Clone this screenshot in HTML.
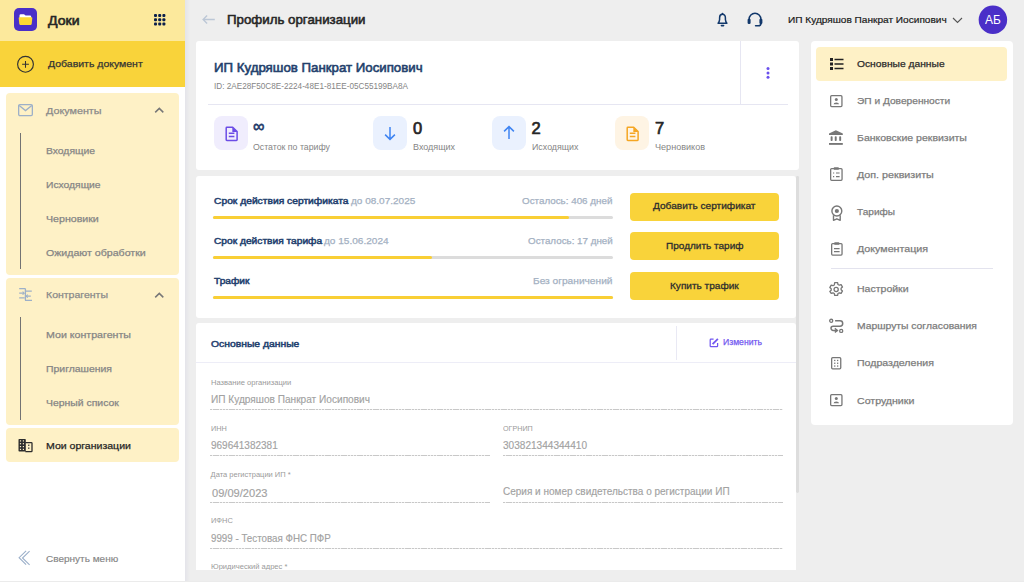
<!DOCTYPE html>
<html><head><meta charset="utf-8"><style>
html,body{margin:0;padding:0;width:1024px;height:582px;overflow:hidden;background:#EEEEEE;}
body{position:relative;font-family:"Liberation Sans",sans-serif;}
.t{position:absolute;white-space:nowrap;transform-origin:0 0;}
.r{position:absolute;}
.s{position:absolute;overflow:visible;}
</style></head><body>
<div class="r" style="left:0px;top:0px;width:1024px;height:582px;background:#EEEEEE;border-radius:0px;"></div>
<div class="r" style="left:0px;top:0px;width:185px;height:582px;background:#FFFFFF;border-radius:0px;"></div>
<div class="r" style="left:185px;top:0px;width:5px;height:582px;background:linear-gradient(90deg,#E4E4EA,#EEEEEE);border-radius:0px;"></div>
<div class="r" style="left:0px;top:0px;width:185px;height:41px;background:#FCE99C;border-radius:0px;"></div>
<div class="r" style="left:0px;top:41px;width:185px;height:46px;background:#F9D33A;border-radius:0px;"></div>
<div class="r" style="left:6px;top:93px;width:173px;height:181.7px;background:#FEF1C6;border-radius:4px;"></div>
<div class="r" style="left:6px;top:277.8px;width:173px;height:147.2px;background:#FEF1C6;border-radius:4px;"></div>
<div class="r" style="left:6px;top:428.2px;width:173px;height:33.8px;background:#FEF1C6;border-radius:4px;"></div>
<div class="r" style="left:0px;top:581px;width:1024px;height:1px;background:#EBEBEB;border-radius:0px;"></div>
<svg class="s" style="left:14px;top:8px" width="23" height="23" viewBox="0 0 23 23" fill="none"><rect width="23" height="23" rx="5" fill="#4A2FC8"/><path d="M5.5 7.5q0-1.3 1.3-1.3h3.2l1.6 1.4h4.4q1.2 0 1.2 1.2v1.5h-11.7z" fill="#fff"/><path d="M4.7 10q0-.8.8-.8h12q.8 0 .8.8l-.6 6.1q-.1.8-.9.8H6.2q-.8 0-.9-.8z" fill="#FDD835"/></svg>
<div class="t" style="left:47.80px;top:13.79px;font-size:13px;line-height:13px;font-weight:400;color:#262626;-webkit-text-stroke:0.6px currentColor;transform:scaleX(1.0814);">Доки</div>
<svg class="s" style="left:154px;top:14px" width="12" height="12" viewBox="0 0 12 12" fill="none"><rect x="0.0" y="0.0" width="3" height="3" rx="1" fill="#0B1F4B"/><rect x="4.2" y="0.0" width="3" height="3" rx="1" fill="#0B1F4B"/><rect x="8.4" y="0.0" width="3" height="3" rx="1" fill="#0B1F4B"/><rect x="0.0" y="4.2" width="3" height="3" rx="1" fill="#0B1F4B"/><rect x="4.2" y="4.2" width="3" height="3" rx="1" fill="#0B1F4B"/><rect x="8.4" y="4.2" width="3" height="3" rx="1" fill="#0B1F4B"/><rect x="0.0" y="8.4" width="3" height="3" rx="1" fill="#0B1F4B"/><rect x="4.2" y="8.4" width="3" height="3" rx="1" fill="#0B1F4B"/><rect x="8.4" y="8.4" width="3" height="3" rx="1" fill="#0B1F4B"/></svg>
<svg class="s" style="left:16px;top:55px" width="19" height="19" viewBox="0 0 19 19" fill="none"><circle cx="9.5" cy="9.3" r="7.9" stroke="#333" stroke-width="1.15"/><path d="M9.5 5.9v6.8M6.1 9.3h6.8" stroke="#333" stroke-width="1.05"/></svg>
<div class="t" style="left:48.00px;top:59.41px;font-size:9.97px;line-height:9.97px;font-weight:400;color:#333333;-webkit-text-stroke:0.25px currentColor;transform:scaleX(1.0521);">Добавить документ</div>
<svg class="s" style="left:18px;top:104px" width="15" height="12" viewBox="0 0 15 12" fill="none"><rect x="0.65" y="0.65" width="13.7" height="10.9" rx="1.2" stroke="#9DB0C8" stroke-width="1.3"/><path d="M1.2 1.6l6.3 5 6.3-5" stroke="#9DB0C8" stroke-width="1.3"/></svg>
<div class="t" style="left:45.50px;top:105.50px;font-size:9.5px;line-height:9.5px;font-weight:400;color:#8A8A8A;-webkit-text-stroke:0.25px currentColor;transform:scaleX(1.1333);">Документы</div>
<svg class="s" style="left:154px;top:105.6px" width="11" height="8" viewBox="0 0 11 8" fill="none"><path d="M1.2 6.4L5.3 2.4 9.3 6.4" stroke="#777" stroke-width="1.5"/></svg>
<div class="r" style="left:20px;top:133px;width:1.2px;height:135.8px;background:#737373;border-radius:0px;"></div>
<div class="t" style="left:46.00px;top:145.50px;font-size:9.5px;line-height:9.5px;font-weight:400;color:#858585;-webkit-text-stroke:0.25px currentColor;transform:scaleX(1.0879);">Входящие</div>
<div class="t" style="left:46.00px;top:179.70px;font-size:9.5px;line-height:9.5px;font-weight:400;color:#858585;-webkit-text-stroke:0.25px currentColor;transform:scaleX(1.0835);">Исходящие</div>
<div class="t" style="left:46.00px;top:213.90px;font-size:9.5px;line-height:9.5px;font-weight:400;color:#858585;-webkit-text-stroke:0.25px currentColor;transform:scaleX(1.1176);">Черновики</div>
<div class="t" style="left:46.00px;top:248.10px;font-size:9.5px;line-height:9.5px;font-weight:400;color:#858585;-webkit-text-stroke:0.25px currentColor;transform:scaleX(1.1151);">Ожидают обработки</div>
<svg class="s" style="left:19px;top:288px" width="14" height="14" viewBox="0 0 14 14" fill="none"><path d="M0.2 0.7h6.4M6.4 0.7v11.6M6 12.3h7M6.8 3.2h6M0.2 9.9h5.3M0.2 5.2h4.5M11.8 8.2H7.3" stroke="#9DB0C8" stroke-width="1.3"/><path d="M3.6 3.7l1.6 1.5-1.6 1.5M8.8 6.7L7.2 8.2l1.6 1.5" stroke="#9DB0C8" stroke-width="1.1"/></svg>
<div class="t" style="left:46.00px;top:290.40px;font-size:9.5px;line-height:9.5px;font-weight:400;color:#8A8A8A;-webkit-text-stroke:0.25px currentColor;transform:scaleX(1.1082);">Контрагенты</div>
<svg class="s" style="left:154px;top:291.4px" width="11" height="8" viewBox="0 0 11 8" fill="none"><path d="M1.2 6.4L5.3 2.4 9.3 6.4" stroke="#777" stroke-width="1.5"/></svg>
<div class="r" style="left:20px;top:317.2px;width:1.2px;height:102.8px;background:#737373;border-radius:0px;"></div>
<div class="t" style="left:46.00px;top:330.30px;font-size:9.5px;line-height:9.5px;font-weight:400;color:#858585;-webkit-text-stroke:0.25px currentColor;transform:scaleX(1.1182);">Мои контрагенты</div>
<div class="t" style="left:46.00px;top:364.30px;font-size:9.5px;line-height:9.5px;font-weight:400;color:#858585;-webkit-text-stroke:0.25px currentColor;transform:scaleX(1.0981);">Приглашения</div>
<div class="t" style="left:46.00px;top:398.30px;font-size:9.5px;line-height:9.5px;font-weight:400;color:#858585;-webkit-text-stroke:0.25px currentColor;transform:scaleX(1.0961);">Черный список</div>
<svg class="s" style="left:18px;top:439px" width="15" height="13" viewBox="0 0 15 13" fill="none"><rect x="0.5" y="0" width="7.3" height="12.6" rx="0.8" fill="#2D2D2D"/><path d="M7.3 3.6h6a0.7 0.7 0 0 1 .7.7v7.6a0.7 0.7 0 0 1-.7.7h-6" stroke="#2D2D2D" stroke-width="1.3"/><rect x="1.9" y="1.3" width="1.2" height="1.2" fill="#FEF1C6"/><rect x="1.9" y="4.1" width="1.2" height="1.2" fill="#FEF1C6"/><rect x="1.9" y="7.0" width="1.2" height="1.2" fill="#FEF1C6"/><rect x="1.9" y="9.8" width="1.2" height="1.2" fill="#FEF1C6"/><rect x="4.8" y="1.3" width="1.2" height="1.2" fill="#FEF1C6"/><rect x="4.8" y="4.1" width="1.2" height="1.2" fill="#FEF1C6"/><rect x="4.8" y="7.0" width="1.2" height="1.2" fill="#FEF1C6"/><rect x="4.8" y="9.8" width="1.2" height="1.2" fill="#FEF1C6"/><rect x="10.1" y="5.6" width="1.3" height="1.3" fill="#2D2D2D"/><rect x="10.1" y="8.5" width="1.3" height="1.3" fill="#2D2D2D"/></svg>
<div class="t" style="left:46.00px;top:441.00px;font-size:9.5px;line-height:9.5px;font-weight:400;color:#252525;-webkit-text-stroke:0.25px currentColor;transform:scaleX(1.1083);">Мои организации</div>
<svg class="s" style="left:18px;top:550.3px" width="13" height="16" viewBox="0 0 13 16" fill="none"><path d="M8.1 0.8L1.1 7.7l7 6.9M11.6 1.1L4.5 8l7.1 6.9" stroke="#9CB0CA" stroke-width="1.1"/></svg>
<div class="t" style="left:45.70px;top:553.98px;font-size:9.7px;line-height:9.7px;font-weight:400;color:#858585;-webkit-text-stroke:0.15px currentColor;transform:scaleX(1.0338);">Свернуть меню</div>
<svg class="s" style="left:202px;top:14px" width="14" height="11" viewBox="0 0 14 11" fill="none"><path d="M12.8 5.5H1.4M5.1 1.5L1.1 5.5l4 4" stroke="#BCC7D6" stroke-width="1.35"/></svg>
<div class="t" style="left:226.50px;top:12.89px;font-size:13px;line-height:13px;font-weight:400;color:#262626;-webkit-text-stroke:0.55px currentColor;transform:scaleX(1.0223);">Профиль организации</div>
<svg class="s" style="left:717px;top:12px" width="11" height="15" viewBox="0 0 11 15" fill="none"><path d="M1.1 11.3H9.9C9 10.3 8.5 9 8.4 7.5V5.7C8.4 3.6 7.2 2.3 5.5 2.3S2.6 3.6 2.6 5.7V7.5C2.5 9 2 10.3 1.1 11.3Z" stroke="#12386B" stroke-width="1.5" stroke-linejoin="round"/><circle cx="5.5" cy="1.6" r="0.9" fill="#12386B"/><path d="M4.4 13.6h2.2" stroke="#12386B" stroke-width="1.6" stroke-linecap="round"/></svg>
<svg class="s" style="left:747px;top:12px" width="16" height="16" viewBox="0 0 16 16" fill="none"><path d="M2.1 10V7.2a5.9 5.9 0 0 1 11.8 0V10" stroke="#12386B" stroke-width="1.5"/><rect x="0.6" y="6.8" width="3" height="5.2" rx="1.2" fill="#12386B"/><rect x="12.4" y="6.8" width="3" height="5.2" rx="1.2" fill="#12386B"/><path d="M13.9 11.5q0 2.3-2.6 2.3H8.6" stroke="#12386B" stroke-width="1.6" stroke-linecap="round"/></svg>
<div class="t" style="left:788.00px;top:14.87px;font-size:9.6px;line-height:9.6px;font-weight:400;color:#1A1A1A;-webkit-text-stroke:0.2px currentColor;transform:scaleX(1.0513);">ИП Кудряшов Панкрат Иосипович</div>
<svg class="s" style="left:952px;top:17px" width="11" height="7" viewBox="0 0 11 7" fill="none"><path d="M1 1l4.5 4.5L10 1" stroke="#555" stroke-width="1.1"/></svg>
<svg class="s" style="left:978px;top:5px" width="30" height="30" viewBox="0 0 30 30" fill="none"><circle cx="14.9" cy="14.75" r="14.25" fill="#4A2FC8"/></svg>
<div class="t" style="left:984.70px;top:14.21px;font-size:12.5px;line-height:12.5px;font-weight:400;color:#FFFFFF;transform:scaleX(0.9552);">АБ</div>
<div class="r" style="left:196px;top:41px;width:603px;height:128.5px;background:#FFFFFF;border-radius:3px;"></div>
<div class="t" style="left:214.20px;top:60.97px;font-size:13.5px;line-height:13.5px;font-weight:400;color:#233F6C;-webkit-text-stroke:0.6px currentColor;transform:scaleX(0.9820);">ИП Кудряшов Панкрат Иосипович</div>
<div class="t" style="left:214.00px;top:81.88px;font-size:9px;line-height:9px;font-weight:400;color:#858585;transform:scaleX(0.9081);">ID: 2AE28F50C8E-2224-48E1-81EE-05C55199BA8A</div>
<div class="r" style="left:740px;top:41px;width:1px;height:63px;background:#E6E6F2;border-radius:0px;"></div>
<svg class="s" style="left:766.3px;top:66.8px" width="4" height="12" viewBox="0 0 4 12" fill="none"><circle cx="2" cy="1.55" r="1.5" fill="#6A50EE"/><circle cx="2" cy="5.9" r="1.5" fill="#6A50EE"/><circle cx="2" cy="10.2" r="1.5" fill="#6A50EE"/></svg>
<div class="r" style="left:208px;top:104px;width:580px;height:1px;background:#E6E6F2;border-radius:0px;"></div>
<div class="r" style="left:214px;top:116px;width:34px;height:34px;background:#F0EDFD;border-radius:8px;"></div>
<svg class="s" style="left:224.5px;top:126px" width="12.5" height="15.5" viewBox="0 0 12.5 15.5" fill="none"><path d="M1.9 1.2h5.8l4.4 4.4v8.2a.7.7 0 0 1-.7.7H1.9a.7.7 0 0 1-.7-.7V1.9a.7.7 0 0 1 .7-.7z" stroke="#6B4CE6" stroke-width="1.5" stroke-linejoin="round"/><path d="M7.3 1.2v4.8h4.8z" fill="#6B4CE6"/><path d="M3.8 7.3h5.6M3.8 10.4h5.6" stroke="#6B4CE6" stroke-width="1.5"/></svg>
<div class="t" style="left:253.20px;top:117.80px;font-size:17px;line-height:17px;font-weight:400;color:#1E3A6A;-webkit-text-stroke:0.6px currentColor;transform:scaleX(0.9489);">∞</div>
<div class="t" style="left:253.00px;top:143.00px;font-size:8.5px;line-height:8.5px;font-weight:400;color:#858585;transform:scaleX(1.0315);">Остаток по тарифу</div>
<div class="r" style="left:373px;top:116px;width:34px;height:34px;background:#EAF1FE;border-radius:8px;"></div>
<svg class="s" style="left:383px;top:126px" width="14" height="15" viewBox="0 0 14 15" fill="none"><path d="M7 1v12.3M2.1 8.6L7 13.4l4.9-4.8" stroke="#3F84F2" stroke-width="1.5"/></svg>
<div class="t" style="left:413.00px;top:120.02px;font-size:16.5px;line-height:16.5px;font-weight:400;color:#262626;-webkit-text-stroke:0.7px currentColor;">0</div>
<div class="t" style="left:413.00px;top:143.00px;font-size:8.5px;line-height:8.5px;font-weight:400;color:#858585;transform:scaleX(1.0547);">Входящих</div>
<div class="r" style="left:492px;top:116px;width:34px;height:34px;background:#EAF1FE;border-radius:8px;"></div>
<svg class="s" style="left:502px;top:124.5px" width="14" height="15" viewBox="0 0 14 15" fill="none"><path d="M7 14V1.7M2.1 6.4L7 1.6l4.9 4.8" stroke="#3F84F2" stroke-width="1.5"/></svg>
<div class="t" style="left:531.50px;top:120.02px;font-size:16.5px;line-height:16.5px;font-weight:400;color:#262626;-webkit-text-stroke:0.7px currentColor;">2</div>
<div class="t" style="left:531.50px;top:143.00px;font-size:8.5px;line-height:8.5px;font-weight:400;color:#858585;transform:scaleX(1.0424);">Исходящих</div>
<div class="r" style="left:615px;top:116px;width:34px;height:34px;background:#FEF4E4;border-radius:8px;"></div>
<svg class="s" style="left:625.5px;top:126px" width="12.5" height="15.5" viewBox="0 0 12.5 15.5" fill="none"><path d="M1.9 1.2h5.8l4.4 4.4v8.2a.7.7 0 0 1-.7.7H1.9a.7.7 0 0 1-.7-.7V1.9a.7.7 0 0 1 .7-.7z" stroke="#F5A623" stroke-width="1.5" stroke-linejoin="round"/><path d="M7.3 1.2v4.8h4.8z" fill="#F5A623"/><path d="M3.8 7.3h5.6M3.8 10.4h5.6" stroke="#F5A623" stroke-width="1.5"/></svg>
<div class="t" style="left:655.00px;top:120.02px;font-size:16.5px;line-height:16.5px;font-weight:400;color:#262626;-webkit-text-stroke:0.7px currentColor;">7</div>
<div class="t" style="left:655.00px;top:143.00px;font-size:8.5px;line-height:8.5px;font-weight:400;color:#858585;transform:scaleX(1.0669);">Черновиков</div>
<div class="r" style="left:196px;top:175.5px;width:600px;height:142px;background:#FFFFFF;border-radius:3px;"></div>
<div class="t" style="left:213.60px;top:196.37px;font-size:9.6px;line-height:9.6px;font-weight:400;color:#22406E;-webkit-text-stroke:0.5px currentColor;transform:scaleX(1.0703);">Срок действия сертификата</div>
<div class="t" style="left:351.20px;top:196.21px;font-size:9.9px;line-height:9.9px;font-weight:400;color:#A3B0C2;-webkit-text-stroke:0.25px currentColor;transform:scaleX(1.0144);">до 08.07.2025</div>
<div class="t" style="left:521.90px;top:196.21px;font-size:9.9px;line-height:9.9px;font-weight:400;color:#A3B0C2;-webkit-text-stroke:0.25px currentColor;transform:scaleX(0.9942);">Осталось: 406 дней</div>
<div class="r" style="left:213px;top:216.4px;width:400px;height:3px;background:#DCDCDC;border-radius:1.5px;"></div>
<div class="r" style="left:213px;top:216.4px;width:355.75px;height:3px;background:#F9CF35;border-radius:1.5px;"></div>
<div class="r" style="left:630px;top:192.5px;width:149px;height:28px;background:#F9D33A;border-radius:4px;"></div>
<div class="t" style="left:653.25px;top:201.20px;font-size:9.8px;line-height:9.8px;font-weight:400;color:#2E2E2E;-webkit-text-stroke:0.3px currentColor;transform:scaleX(1.0317);">Добавить сертификат</div>
<div class="t" style="left:213.60px;top:236.37px;font-size:9.6px;line-height:9.6px;font-weight:400;color:#22406E;-webkit-text-stroke:0.5px currentColor;transform:scaleX(1.0621);">Срок действия тарифа</div>
<div class="t" style="left:324.20px;top:236.21px;font-size:9.9px;line-height:9.9px;font-weight:400;color:#A3B0C2;-webkit-text-stroke:0.25px currentColor;transform:scaleX(1.0191);">до 15.06.2024</div>
<div class="t" style="left:527.50px;top:236.21px;font-size:9.9px;line-height:9.9px;font-weight:400;color:#A3B0C2;-webkit-text-stroke:0.25px currentColor;transform:scaleX(0.9927);">Осталось: 17 дней</div>
<div class="r" style="left:213px;top:256.4px;width:400px;height:3px;background:#DCDCDC;border-radius:1.5px;"></div>
<div class="r" style="left:213px;top:256.4px;width:219.39999999999998px;height:3px;background:#F9CF35;border-radius:1.5px;"></div>
<div class="r" style="left:630px;top:232.3px;width:149px;height:28px;background:#F9D33A;border-radius:4px;"></div>
<div class="t" style="left:665.75px;top:241.00px;font-size:9.8px;line-height:9.8px;font-weight:400;color:#2E2E2E;-webkit-text-stroke:0.3px currentColor;transform:scaleX(1.0228);">Продлить тариф</div>
<div class="t" style="left:213.60px;top:276.37px;font-size:9.6px;line-height:9.6px;font-weight:400;color:#22406E;-webkit-text-stroke:0.5px currentColor;transform:scaleX(1.0578);">Трафик</div>
<div class="t" style="left:532.80px;top:276.21px;font-size:9.9px;line-height:9.9px;font-weight:400;color:#A3B0C2;-webkit-text-stroke:0.25px currentColor;transform:scaleX(1.0298);">Без ограничений</div>
<div class="r" style="left:213px;top:296.4px;width:400px;height:3px;background:#DCDCDC;border-radius:1.5px;"></div>
<div class="r" style="left:213px;top:296.4px;width:399.5px;height:3px;background:#F9CF35;border-radius:1.5px;"></div>
<div class="r" style="left:630px;top:272.1px;width:149px;height:28px;background:#F9D33A;border-radius:4px;"></div>
<div class="t" style="left:670.15px;top:280.80px;font-size:9.8px;line-height:9.8px;font-weight:400;color:#2E2E2E;-webkit-text-stroke:0.3px currentColor;transform:scaleX(1.0266);">Купить трафик</div>
<div class="r" style="left:796.2px;top:175.5px;width:2.9px;height:317.3px;background:#DDDDDD;border-radius:1.4px;"></div>
<div class="r" style="left:196px;top:323px;width:600px;height:247px;background:#FFFFFF;border-radius:3px 3px 0 0px;"></div>
<div class="t" style="left:210.60px;top:338.67px;font-size:9.6px;line-height:9.6px;font-weight:400;color:#22406E;-webkit-text-stroke:0.5px currentColor;transform:scaleX(1.0781);">Основные данные</div>
<div class="r" style="left:676px;top:326px;width:1px;height:34px;background:#E9E9F4;border-radius:0px;"></div>
<svg class="s" style="left:709px;top:338px" width="10" height="10" viewBox="0 0 10 10" fill="none"><path d="M4.6 1.2H1.9a.7.7 0 0 0-.7.7v6a.7.7 0 0 0 .7.7h6a.7.7 0 0 0 .7-.7V5.1" stroke="#7257F0" stroke-width="1.25"/><path d="M3.6 6.1L8.9 0.8" stroke="#7257F0" stroke-width="1.8"/></svg>
<div class="t" style="left:722.80px;top:338.22px;font-size:9.3px;line-height:9.3px;font-weight:400;color:#7257F0;-webkit-text-stroke:0.25px currentColor;transform:scaleX(0.9297);">Изменить</div>
<div class="r" style="left:196px;top:362px;width:600px;height:1px;background:#EDEDF7;border-radius:0px;"></div>
<div class="t" style="left:210.60px;top:378.65px;font-size:7.5px;line-height:7.5px;font-weight:400;color:#9A9A9A;transform:scaleX(1.0126);">Название организации</div>
<div class="t" style="left:210.60px;top:394.01px;font-size:10.5px;line-height:10.5px;font-weight:400;color:#A2A2A2;-webkit-text-stroke:0.15px currentColor;transform:scaleX(0.9624);">ИП Кудряшов Панкрат Иосипович</div>
<div class="r" style="left:210px;top:409px;width:573px;height:1px;background:repeating-linear-gradient(90deg,#C8C8C8 0 2.4px,#F0F0F0 2.4px 3.2px);border-radius:0px;"></div>
<div class="t" style="left:210.60px;top:424.75px;font-size:7.5px;line-height:7.5px;font-weight:400;color:#9A9A9A;transform:scaleX(0.9739);">ИНН</div>
<div class="t" style="left:210.60px;top:440.21px;font-size:10.5px;line-height:10.5px;font-weight:400;color:#A2A2A2;-webkit-text-stroke:0.15px currentColor;transform:scaleX(0.9518);">969641382381</div>
<div class="r" style="left:210px;top:455px;width:280px;height:1px;background:repeating-linear-gradient(90deg,#C8C8C8 0 2.4px,#F0F0F0 2.4px 3.2px);border-radius:0px;"></div>
<div class="t" style="left:503.40px;top:424.75px;font-size:7.5px;line-height:7.5px;font-weight:400;color:#9A9A9A;transform:scaleX(0.9551);">ОГРНИП</div>
<div class="t" style="left:503.40px;top:440.21px;font-size:10.5px;line-height:10.5px;font-weight:400;color:#A2A2A2;-webkit-text-stroke:0.15px currentColor;transform:scaleX(0.9589);">303821344344410</div>
<div class="r" style="left:503px;top:455px;width:280px;height:1px;background:repeating-linear-gradient(90deg,#C8C8C8 0 2.4px,#F0F0F0 2.4px 3.2px);border-radius:0px;"></div>
<div class="t" style="left:210.60px;top:470.95px;font-size:7.5px;line-height:7.5px;font-weight:400;color:#9A9A9A;">Дата регистрации ИП *</div>
<div class="t" style="left:211.80px;top:487.51px;font-size:10.5px;line-height:10.5px;font-weight:400;color:#A2A2A2;-webkit-text-stroke:0.15px currentColor;transform:scaleX(1.0561);">09/09/2023</div>
<div class="r" style="left:210px;top:502px;width:280px;height:1px;background:repeating-linear-gradient(90deg,#C8C8C8 0 2.4px,#F0F0F0 2.4px 3.2px);border-radius:0px;"></div>
<div class="t" style="left:503.40px;top:486.41px;font-size:10.5px;line-height:10.5px;font-weight:400;color:#A2A2A2;-webkit-text-stroke:0.15px currentColor;transform:scaleX(0.9523);">Серия и номер свидетельства о регистрации ИП</div>
<div class="r" style="left:503px;top:502px;width:280px;height:1px;background:repeating-linear-gradient(90deg,#C8C8C8 0 2.4px,#F0F0F0 2.4px 3.2px);border-radius:0px;"></div>
<div class="t" style="left:210.60px;top:517.15px;font-size:7.5px;line-height:7.5px;font-weight:400;color:#9A9A9A;transform:scaleX(0.9943);">ИФНС</div>
<div class="t" style="left:210.60px;top:532.61px;font-size:10.5px;line-height:10.5px;font-weight:400;color:#A2A2A2;-webkit-text-stroke:0.15px currentColor;transform:scaleX(0.9305);">9999 - Тестовая ФНС ПФР</div>
<div class="r" style="left:210px;top:548px;width:573px;height:1px;background:repeating-linear-gradient(90deg,#C8C8C8 0 2.4px,#F0F0F0 2.4px 3.2px);border-radius:0px;"></div>
<div class="t" style="left:210.60px;top:563.35px;font-size:7.5px;line-height:7.5px;font-weight:400;color:#9A9A9A;transform:scaleX(1.0090);">Юридический адрес *</div>
<div class="r" style="left:190px;top:570px;width:606px;height:10px;background:#EEEEEE;border-radius:0px;"></div>
<div class="r" style="left:810.5px;top:41px;width:202.5px;height:384.3px;background:#FFFFFF;border-radius:4px;"></div>
<div class="r" style="left:816.3px;top:46.7px;width:190.7px;height:34px;background:#FEF1C6;border-radius:4px;"></div>
<div class="t" style="left:856.70px;top:59.20px;font-size:9.5px;line-height:9.5px;font-weight:400;color:#2A2A2A;-webkit-text-stroke:0.25px currentColor;transform:scaleX(1.0795);">Основные данные</div>
<div class="t" style="left:856.70px;top:96.20px;font-size:9.5px;line-height:9.5px;font-weight:400;color:#7C7C7C;-webkit-text-stroke:0.25px currentColor;transform:scaleX(1.0708);">ЭП и Доверенности</div>
<div class="t" style="left:856.70px;top:133.20px;font-size:9.5px;line-height:9.5px;font-weight:400;color:#7C7C7C;-webkit-text-stroke:0.25px currentColor;transform:scaleX(1.1067);">Банковские реквизиты</div>
<div class="t" style="left:856.70px;top:170.20px;font-size:9.5px;line-height:9.5px;font-weight:400;color:#7C7C7C;-webkit-text-stroke:0.25px currentColor;transform:scaleX(1.1267);">Доп. реквизиты</div>
<div class="t" style="left:856.70px;top:207.20px;font-size:9.5px;line-height:9.5px;font-weight:400;color:#7C7C7C;-webkit-text-stroke:0.25px currentColor;transform:scaleX(1.0587);">Тарифы</div>
<div class="t" style="left:856.70px;top:244.10px;font-size:9.5px;line-height:9.5px;font-weight:400;color:#7C7C7C;-webkit-text-stroke:0.25px currentColor;transform:scaleX(1.1248);">Документация</div>
<div class="t" style="left:856.70px;top:284.20px;font-size:9.5px;line-height:9.5px;font-weight:400;color:#7C7C7C;-webkit-text-stroke:0.25px currentColor;transform:scaleX(1.1077);">Настройки</div>
<div class="t" style="left:856.70px;top:321.30px;font-size:9.5px;line-height:9.5px;font-weight:400;color:#7C7C7C;-webkit-text-stroke:0.25px currentColor;transform:scaleX(1.0876);">Маршруты согласования</div>
<div class="t" style="left:856.70px;top:358.40px;font-size:9.5px;line-height:9.5px;font-weight:400;color:#7C7C7C;-webkit-text-stroke:0.25px currentColor;transform:scaleX(1.1130);">Подразделения</div>
<div class="t" style="left:856.70px;top:395.50px;font-size:9.5px;line-height:9.5px;font-weight:400;color:#7C7C7C;-webkit-text-stroke:0.25px currentColor;transform:scaleX(1.1135);">Сотрудники</div>
<div class="r" style="left:831px;top:268px;width:162px;height:1px;background:#E3E3EE;border-radius:0px;"></div>
<svg class="s" style="left:829.5px;top:57.5px" width="14" height="12" viewBox="0 0 14 12" fill="none"><rect x="0" y="0" width="3" height="3" fill="#222"/><rect x="0" y="4.5" width="3" height="3" fill="#222"/><rect x="0" y="9" width="3" height="3" fill="#222"/><path d="M4.5 1.5h9M4.5 6h9M4.5 10.5h9" stroke="#222" stroke-width="1.5"/></svg>
<svg class="s" style="left:829.8px;top:94.6px" width="12.6" height="12" viewBox="0 0 12.6 12" fill="none"><rect x="0.65" y="0.65" width="11.3" height="10.9" rx="1" stroke="#777777" stroke-width="1.3"/><circle cx="6.3" cy="4.6" r="1.5" fill="#777777"/><path d="M3.6 9.3q0-1.8 2.7-1.8t2.7 1.8z" fill="#777777"/></svg>
<svg class="s" style="left:829.3px;top:130px" width="14" height="15" viewBox="0 0 14 15" fill="none"><path d="M6.9 0.2L13.8 3.4V4.9H0V3.4z" fill="#777777"/><rect x="1.65" y="6.2" width="1.95" height="4.9" rx="0.8" fill="#777777"/><rect x="5.75" y="6.2" width="1.95" height="4.9" rx="0.8" fill="#777777"/><rect x="10.2" y="6.2" width="1.95" height="4.9" rx="0.8" fill="#777777"/><rect x="0" y="13" width="13.8" height="1.85" fill="#777777"/></svg>
<svg class="s" style="left:829.7px;top:167px" width="13" height="14" viewBox="0 0 13 14" fill="none"><rect x="0.65" y="1.6" width="11.4" height="11.7" rx="1" stroke="#777777" stroke-width="1.3"/><rect x="3.8" y="0.2" width="5" height="2.6" rx="0.6" fill="#777777"/><path d="M3 6h1.2M6 6h3.6M3 9.6h1.2M6 9.6h3.6" stroke="#777777" stroke-width="1.2"/></svg>
<svg class="s" style="left:830.9px;top:204.5px" width="12" height="16" viewBox="0 0 12 16" fill="none"><circle cx="5.85" cy="6" r="4.95" stroke="#777777" stroke-width="1.4"/><circle cx="5.85" cy="6" r="2.1" fill="#777777"/><path d="M2.5 10.2v5.1l3.35-1.5 3.35 1.5v-5.1" stroke="#777777" stroke-width="1.4" stroke-linejoin="round"/></svg>
<svg class="s" style="left:830.6px;top:241.5px" width="11.7" height="13.8" viewBox="0 0 11.7 13.8" fill="none"><rect x="0.65" y="1.6" width="10.4" height="11.5" rx="1" stroke="#777777" stroke-width="1.3"/><rect x="3.3" y="0.2" width="5" height="2.6" rx="0.6" fill="#777777"/><path d="M3 6.6h5.6M3 9.6h5.6" stroke="#777777" stroke-width="1.2"/></svg>
<svg class="s" style="left:829.2px;top:281.7px" width="14.3" height="13.8" viewBox="0 0 14.3 13.8" fill="none"><path d="M5.7 0.7h2.9l.4 1.8 1.3.7 1.8-.6 1.4 2.5-1.4 1.2v1.4l1.4 1.2-1.4 2.5-1.8-.6-1.3.7-.4 1.8H5.7l-.4-1.8-1.3-.7-1.8.6L.8 9.4l1.4-1.2V6.8L.8 5.6l1.4-2.5 1.8.6 1.3-.7z" stroke="#777777" stroke-width="1.3" stroke-linejoin="round"/><circle cx="7.15" cy="7.5" r="2.1" stroke="#777777" stroke-width="1.3"/></svg>
<svg class="s" style="left:828px;top:317px" width="16" height="17" viewBox="0 0 16 17" fill="none"><circle cx="3.2" cy="3.8" r="1.55" stroke="#777777" stroke-width="1.3"/><path d="M7.1 3.8H12a2.7 2.7 0 0 1 0 5.4H5.1a2.1 2.1 0 0 0 0 4.2H9.2" stroke="#777777" stroke-width="1.5"/><path d="M6.8 11.4l2.6 2-2.6 2" stroke="#777777" stroke-width="1.4"/><circle cx="13.2" cy="13.9" r="1.55" stroke="#777777" stroke-width="1.3"/></svg>
<svg class="s" style="left:831px;top:356.5px" width="10.4" height="12.5" viewBox="0 0 10.4 12.5" fill="none"><rect x="0.65" y="0.65" width="9.1" height="11.2" rx="1" stroke="#777777" stroke-width="1.3"/><rect x="3.1" y="2.8" width="1.3" height="1.3" fill="#777777"/><rect x="3.1" y="5.6" width="1.3" height="1.3" fill="#777777"/><rect x="3.1" y="8.4" width="1.3" height="1.3" fill="#777777"/><rect x="6.0" y="2.8" width="1.3" height="1.3" fill="#777777"/><rect x="6.0" y="5.6" width="1.3" height="1.3" fill="#777777"/><rect x="6.0" y="8.4" width="1.3" height="1.3" fill="#777777"/></svg>
<svg class="s" style="left:830px;top:393.8px" width="12.6" height="12" viewBox="0 0 12.6 12" fill="none"><rect x="0.65" y="0.65" width="11.3" height="10.9" rx="1" stroke="#777777" stroke-width="1.3"/><circle cx="6.3" cy="4.6" r="1.5" fill="#777777"/><path d="M3.6 9.3q0-1.8 2.7-1.8t2.7 1.8z" fill="#777777"/></svg>
</body></html>
